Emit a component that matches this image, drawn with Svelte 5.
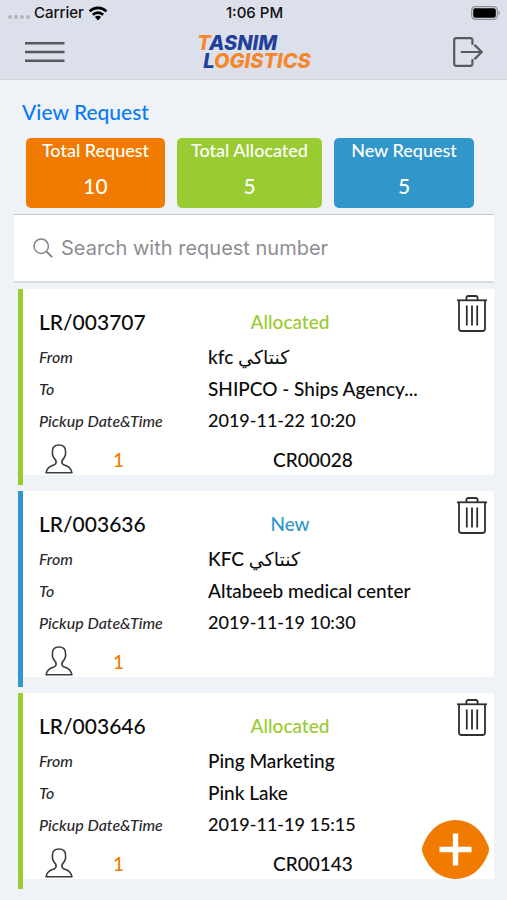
<script>
  const stats = [
    { label: 'Total Request', value: 10, tone: 'orange' },
    { label: 'Total Allocated', value: 5, tone: 'green' },
    { label: 'New Request', value: 5, tone: 'blue' }
  ];

  const requests = [
    { id: 'LR/003707', status: 'Allocated', tone: 'green', from: 'kfc كنتاكي', to: 'SHIPCO - Ships Agency...', pickup: '2019-11-22 10:20', people: 1, code: 'CR00028' },
    { id: 'LR/003636', status: 'New', tone: 'blue', from: 'KFC كنتاكي', to: 'Altabeeb medical center', pickup: '2019-11-19 10:30', people: 1, code: '' },
    { id: 'LR/003646', status: 'Allocated', tone: 'green', from: 'Ping Marketing', to: 'Pink Lake', pickup: '2019-11-19 15:15', people: 1, code: 'CR00143' }
  ];

  let query = $state('');
  let shown = $derived(requests.filter((r) => r.id.toLowerCase().includes(query.toLowerCase())));
</script>

<div class="app">
  <header>
    <div class="status">
      <div class="carrier">
        <span class="dots"><i></i><i></i><i></i><i></i></span>
        <span>Carrier</span>
        <svg width="20" height="15" viewBox="0 0 20 15" aria-hidden="true">
          <g fill="none" stroke="#000" stroke-width="2.7">
            <path d="M1.6 5.4a11.9 11.9 0 0 1 16.8 0" />
            <path d="M4.9 8.8a7.2 7.2 0 0 1 10.2 0" />
          </g>
          <path d="M10 14.4l-3.1-3.3a4.4 4.4 0 0 1 6.2 0z" />
        </svg>
      </div>
      <span class="time">1:06 PM</span>
      <svg class="battery" width="30" height="14" viewBox="0 0 30 14" aria-hidden="true">
        <rect x=".7" y=".7" width="25.6" height="12.6" rx="3.6" fill="none" stroke="#8b8e95" stroke-width="1.2" />
        <rect x="2.2" y="2.2" width="22.6" height="9.6" rx="2" />
        <path d="M27.6 4.8c1.9.6 1.9 3.8 0 4.4z" fill="#8b8e95" />
      </svg>
    </div>
    <div class="nav">
      <button aria-label="Menu">
        <svg width="40" height="22" viewBox="0 0 40 22" stroke="#55575b" stroke-width="2.5">
          <path d="M0 2.2h39.5M0 11h39.5M0 19.8h39.5" />
        </svg>
      </button>
      <div class="logo">
        <div><span class="o">T</span><span class="b">ASNIM</span></div>
        <div class="second"><span class="b">L</span><span class="o">OGISTICS</span></div>
      </div>
      <button aria-label="Log out">
        <svg width="30" height="30" viewBox="0 0 30 30" fill="none" stroke="#58595d" stroke-width="2.2" stroke-linecap="round">
          <path d="M19.4 7V3.2Q19.4 1.2 17.4 1.2H3.2Q1.2 1.2 1.2 3.2V26.8Q1.2 28.8 3.2 28.8H17.4Q19.4 28.8 19.4 26.8V23" />
          <path d="M8.6 15H28.6M22 8.4l6.8 6.6-6.8 6.6" />
        </svg>
      </button>
    </div>
  </header>

  <main>
    <h1>View Request</h1>

    <section class="stats">
      {#each stats as s}
        <div class="stat {s.tone}">
          <span>{s.label}</span>
          <strong>{s.value}</strong>
        </div>
      {/each}
    </section>

    <label class="search">
      <svg width="20" height="20" viewBox="0 0 20 20" fill="none" stroke="#858589" stroke-linecap="round">
        <circle cx="8.2" cy="8.2" r="7.2" stroke-width="1.5" />
        <path d="M13.6 13.6l5 5" stroke-width="2" />
      </svg>
      <input type="text" aria-label="Search with request number" placeholder="Search with request number" bind:value={query} />
    </label>

    <section class="list">
      {#each shown as r (r.id)}
        <article class={r.tone}>
          <div class="body">
            <div class="row head">
              <h2>{r.id}</h2>
              <span class="state">{r.status}</span>
            </div>
            <div class="row"><span class="key">From</span><span class="val">{r.from}</span></div>
            <div class="row"><span class="key">To</span><span class="val">{r.to}</span></div>
            <div class="row"><span class="key">Pickup Date&amp;Time</span><span class="val date">{r.pickup}</span></div>
            <div class="row foot">
              <span class="people">
                <svg width="28" height="30" viewBox="0 0 28 30" fill="none" stroke="#3c3c3e" stroke-width="1.6" stroke-linejoin="round">
                  <path d="M14 1C9.6 1 7.5 3.4 7.5 6.8C7.5 8.6 7.2 9.6 7.6 11C8 12.6 9.4 14.8 10.8 16.4C11.7 18.8 11 20 9.2 20.9C5.4 22.3 1.7 23.4 1 28.8H27C26.3 23.4 22.6 22.3 18.8 20.9C17 20 16.3 18.8 17.2 16.4C18.6 14.8 20 12.6 20.4 11C20.8 9.6 20.5 8.6 20.5 6.8C20.5 3.4 18.4 1 14 1Z" />
                </svg>
                <span class="count">{r.people}</span>
              </span>
              <span class="code">{r.code}</span>
            </div>
            <button class="trash" aria-label="Delete {r.id}">
              <svg width="30" height="37" viewBox="0 0 30 37" fill="none" stroke="#2f2f31" stroke-width="1.8">
                <path d="M0 5.3H30" />
                <path d="M9.4 5V3Q9.4 1 11.4 1H18.6Q20.6 1 20.6 3V5" />
                <path d="M2 5.5V33.5Q2 36 4.5 36H25.5Q28 36 28 33.5V5.5" />
                <path d="M9.8 10.5V30.5M15 10.5V30.5M20.2 10.5V30.5" />
              </svg>
            </button>
          </div>
        </article>
      {/each}
    </section>
  </main>

  <button class="add" aria-label="Add request">
    <svg width="67" height="59" viewBox="0 0 67 59">
      <path d="M33.5 0C48 0 60 9 66.2 25.5Q67.8 29.5 66.2 33.5C60 50 48 59 33.5 59C19 59 7 50 .8 33.5Q-.8 29.5 .8 25.5C7 9 19 0 33.5 0Z" fill="#f07b00" />
      <path d="M17.5 29.5H49.5M33.5 13.5V45.5" stroke="#fff" stroke-width="5.4" />
    </svg>
  </button>
</div>

<style>
  :global(body) {
    background: #eff3f8;
  }
  .app {
    min-height: 100vh;
    padding-bottom: 10px;
    box-sizing: border-box;
    font-family: Lato, 'Noto Sans', 'DejaVu Sans', sans-serif;
    font-weight: 500;
    font-variant-ligatures: no-common-ligatures;
    color: #0c0c0c;
  }
  button {
    display: flex;
    padding: 0;
    border: 0;
    background: none;
    cursor: pointer;
  }
  svg {
    display: block;
    flex: none;
  }
  header {
    background: #dce0ea;
    border-bottom: 1px solid #cdd2da;
  }
  .status {
    display: grid;
    grid-template-columns: 1fr auto 1fr;
    align-items: center;
    height: 26px;
    padding: 0 6px 0 8px;
    font: 500 15px/26px Inter, sans-serif;
    color: #111;
  }
  .carrier {
    display: flex;
    align-items: center;
    gap: 4px;
  }
  .dots {
    display: flex;
    gap: 2px;
    padding-top: 8px;
  }
  .dots i {
    width: 4px;
    height: 4px;
    border-radius: 50%;
    background: #b3b6be;
  }
  .battery {
    justify-self: end;
  }
  .nav {
    display: grid;
    grid-template-columns: 1fr auto 1fr;
    align-items: center;
    box-sizing: border-box;
    height: 53px;
    padding: 0 24px 2px 25px;
  }
  .nav > :last-child {
    justify-self: end;
  }
  .logo {
    font: italic 800 20px/18px Inter, 'Liberation Sans', sans-serif;
  }
  .second {
    padding-left: 6px;
  }
  .o {
    color: #f5872a;
  }
  .b {
    color: #20409a;
  }
  h1 {
    margin: 0;
    padding: 20px 22px 14px;
    font-size: 21px;
    line-height: 24px;
    font-weight: 500;
    color: #0b7bf2;
  }
  .stats {
    display: grid;
    grid-template-columns: 139fr 145fr 140fr;
    gap: 12px;
    padding: 0 33px 0 26px;
  }
  .stat {
    display: flex;
    flex-direction: column;
    align-items: center;
    gap: 12px;
    height: 70px;
    border-radius: 5px;
    background: var(--tone);
    color: #fff;
    font-size: 18px;
    line-height: 24px;
    white-space: nowrap;
  }
  .stat strong {
    font-size: 21px;
    font-weight: 500;
  }
  .orange {
    --tone: #f07b00;
  }
  .green {
    --tone: #99cb32;
  }
  .blue {
    --tone: #3196c9;
  }
  .search {
    display: flex;
    align-items: center;
    gap: 8px;
    height: 66px;
    margin: 6px 13px 6px 14px;
    padding: 0 19px;
    background: #fff;
    border-top: 1px solid #c3c6ca;
    border-bottom: 2px solid #d8dce0;
  }
  .search input {
    flex: 1;
    min-width: 0;
    padding: 0;
    border: 0;
    outline: 0;
    background: none;
    font: 400 20px/26px Inter, sans-serif;
    color: #222;
  }
  .search input::placeholder {
    color: #8e8e92;
    opacity: 1;
  }
  .list {
    display: flex;
    flex-direction: column;
    gap: 6px;
    margin: 0 13px 0 18px;
  }
  article {
    border-left: 5px solid var(--tone);
    padding-bottom: 10px;
  }
  .body {
    position: relative;
    padding: 13px 0 0 16px;
    background: #fff;
  }
  .row {
    display: grid;
    grid-template-columns: 169fr 286fr;
    align-items: center;
    height: 32px;
  }
  .head {
    grid-template-columns: 169fr 164fr 122fr;
    height: 38px;
  }
  h2 {
    margin: 0;
    font-size: 21px;
    font-weight: 500;
  }
  .state {
    text-align: center;
    font-size: 19px;
    color: var(--tone);
  }
  .key {
    font-size: 16px;
    font-style: italic;
    color: #2a2a2c;
  }
  .val,
  .code {
    font-size: 19px;
    white-space: nowrap;
  }
  .date {
    font-size: 18px;
  }
  .foot {
    height: 30px;
    padding: 8px 0 1px;
  }
  .people {
    display: flex;
    align-items: center;
    gap: 40px;
    padding-left: 6px;
  }
  .count {
    font-size: 19px;
    color: #f07b00;
  }
  .code {
    padding-left: 65px;
  }
  .trash {
    position: absolute;
    top: 6px;
    right: 7px;
  }
  .add {
    position: fixed;
    right: 18px;
    bottom: 21px;
  }
</style>
